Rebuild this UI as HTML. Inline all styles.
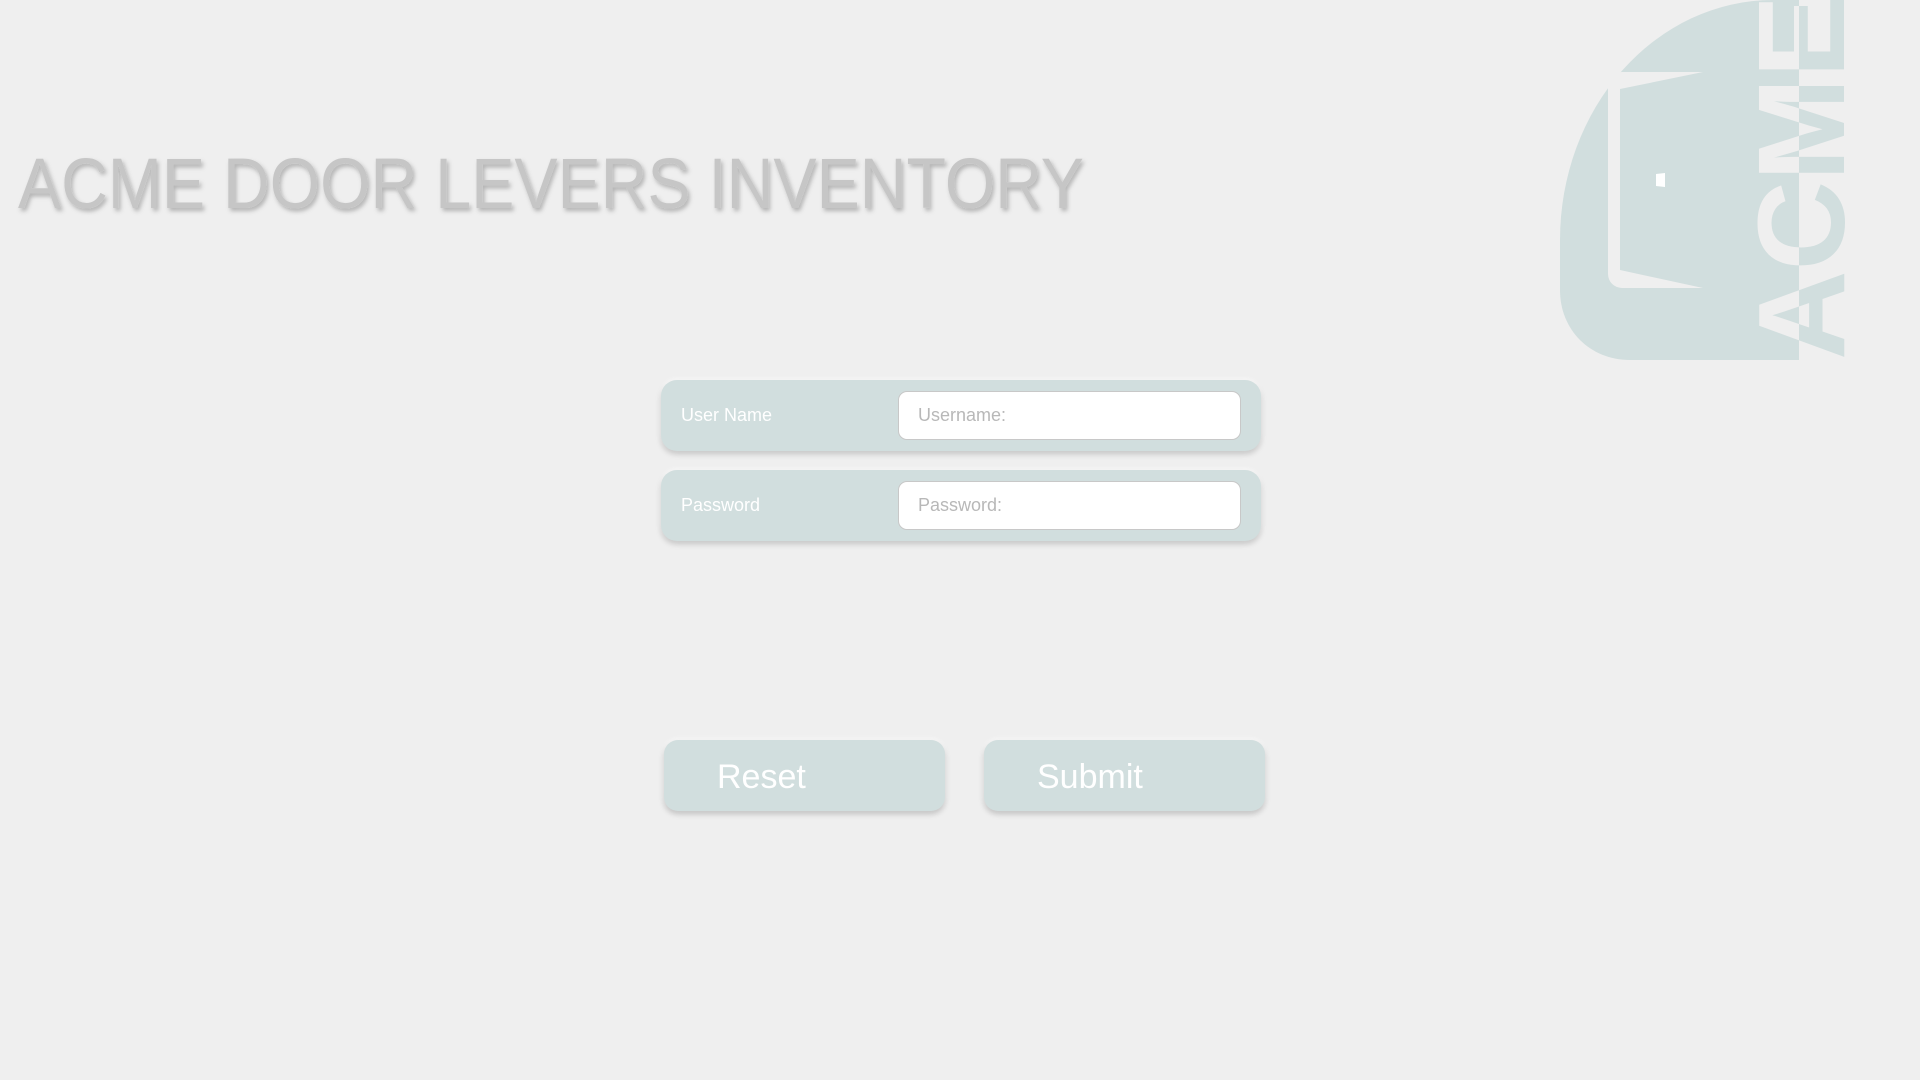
<!DOCTYPE html>
<html><head><meta charset="utf-8"><style>
html,body{margin:0;padding:0;background:#efefef;width:1920px;height:1080px;overflow:hidden;font-family:"Liberation Sans",sans-serif}
.row{position:absolute;left:661px;width:600px;height:71px;background:#d1dede;border-radius:16px;box-shadow:0 3px 6px rgba(0,0,0,.18),0 -1px 4px rgba(255,255,255,.9)}
.lbl{position:absolute;left:20px;top:0;line-height:71px;color:#fff;font-size:18px}
.inp{position:absolute;left:237px;top:11px;width:343px;height:49px;background:#fff;border:1px solid #c8c8c8;border-radius:9px;box-sizing:border-box;color:#b8b8b8;font-size:18px;line-height:47px;padding-left:19px}
.btn{position:absolute;top:740px;width:281px;height:71px;background:#d1dede;border-radius:14px;box-shadow:0 3px 6px rgba(0,0,0,.2),0 -1px 5px rgba(255,255,255,.9);color:#fff;font-size:34px;line-height:74px}
.btn span{position:absolute;top:0}
</style></head><body>
<svg width="1920" height="1080" style="position:absolute;left:0;top:0">
<defs>
<filter id="sh" x="-5%" y="-20%" width="110%" height="150%"><feDropShadow dx="2" dy="3" stdDeviation="2" flood-color="#000" flood-opacity="0.25"/></filter>
<clipPath id="inB"><rect x="0" y="0" width="1799" height="400"/></clipPath>
</defs>
<text x="18" y="208" font-size="71" fill="#c6c6c6" filter="url(#sh)" textLength="1066" lengthAdjust="spacingAndGlyphs" font-family="Liberation Sans, sans-serif">ACME DOOR LEVERS INVENTORY</text>
<path d="M1799,0 L1773,0 A213 240 0 0 0 1560,240 L1560,290 C1560,330 1590,360 1630,360 L1799,360 Z" fill="#d1dede"/>
<rect x="1608" y="72" width="110" height="216" rx="14" fill="#efefef"/>
<polygon points="1620,89 1703,72 1720,72 1720,288 1703,288 1620,270" fill="#d1dede"/>
<polygon points="1656,174 1665,173 1665,187 1656,186" fill="#fff"/>
<g transform="translate(1844,360) rotate(-90)">
<text x="0" y="0" font-size="123" font-weight="bold" textLength="365" lengthAdjust="spacingAndGlyphs" font-family="Liberation Sans, sans-serif" fill="#d1dede">ACME</text>
</g>
<g clip-path="url(#inB)">
<g transform="translate(1844,360) rotate(-90)">
<text x="0" y="0" font-size="123" font-weight="bold" textLength="365" lengthAdjust="spacingAndGlyphs" font-family="Liberation Sans, sans-serif" fill="#efefef">ACME</text>
</g></g>
</svg>
<div class="row" style="top:380px"><div class="lbl">User Name</div><div class="inp">Username:</div></div>
<div class="row" style="top:470px"><div class="lbl">Password</div><div class="inp">Password:</div></div>
<div class="btn" style="left:664px"><span style="left:53px">Reset</span></div>
<div class="btn" style="left:984px"><span style="left:53px">Submit</span></div>
</body></html>
